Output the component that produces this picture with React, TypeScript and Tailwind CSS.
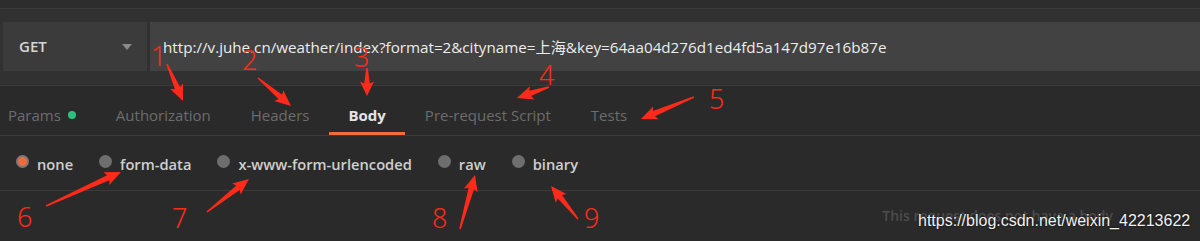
import React from 'react';

const tabs = [
  { label: 'Params', dot: true },
  { label: 'Authorization' },
  { label: 'Headers' },
  { label: 'Body', active: true },
  { label: 'Pre-request Script' },
  { label: 'Tests' },
];

const bodyTypes = [
  { label: 'none', checked: true },
  { label: 'form-data' },
  { label: 'x-www-form-urlencoded' },
  { label: 'raw' },
  { label: 'binary' },
];

// red hand-drawn markers on top of the screenshot
const marks = [
  { n: '1', x: 151, y: 42, from: [167, 64], to: [183, 101] },
  { n: '2', x: 242, y: 46, from: [258, 78], to: [291, 106] },
  { n: '3', x: 354, y: 43, from: [367, 68], to: [367, 96] },
  { n: '4', x: 539, y: 61, from: [549, 87], to: [517, 98] },
  { n: '5', x: 709, y: 85, from: [694, 97], to: [641, 119] },
  { n: '6', x: 17, y: 203, from: [46, 206], to: [121, 172] },
  { n: '7', x: 172, y: 204, from: [207, 212], to: [249, 179] },
  { n: '8', x: 432, y: 204, from: [460, 229], to: [475, 175] },
  { n: '9', x: 584, y: 204, from: [578, 219], to: [551, 186] },
];

function arrowPoints(from: number[], to: number[]) {
  const [x1, y1] = from;
  const [x2, y2] = to;
  const dx = x2 - x1;
  const dy = y2 - y1;
  const len = Math.hypot(dx, dy);
  const ux = dx / len;
  const uy = dy / len;
  const px = -uy;
  const py = ux;
  const head = Math.min(14, len * 0.45);
  const bx = x2 - ux * head;
  const by = y2 - uy * head;
  const tail = 0.8;
  const neck = 2.8;
  const wing = 7;
  const pts = [
    [x1 + px * tail, y1 + py * tail],
    [bx + px * neck, by + py * neck],
    [bx - ux * 2 + px * wing, by - uy * 2 + py * wing],
    [x2, y2],
    [bx - ux * 2 - px * wing, by - uy * 2 - py * wing],
    [bx - px * neck, by - py * neck],
    [x1 - px * tail, y1 - py * tail],
  ];
  return pts.map((p) => p.map((v) => v.toFixed(1)).join(',')).join(' ');
}

export default function App() {
  return (
    <div className="relative w-[1200px] h-[241px] overflow-hidden bg-[#2a2a2a] font-['Open_Sans','Noto_Sans_CJK_SC',sans-serif]">
      {/* top strip */}
      <div className="h-[9px] bg-[#2d2d2d] border-b border-[#3a3a3a]" />

      {/* method + url */}
      <div className="bg-[#313131] pt-[13px] pb-[14px] pl-[3px] flex gap-[3px] border-b border-[#3a3a3a]">
        <div className="w-[144px] h-[49px] bg-[#3b3b3b] flex items-center justify-between pl-[16px] pr-[15px]">
          <span className="text-[15px] font-semibold text-[#d6d6d6]">GET</span>
          <svg width="10" height="6" viewBox="0 0 10 6">
            <path d="M0 0 L10 0 L5 6 Z" fill="#8a8a8a" />
          </svg>
        </div>
        <div className="flex-1 h-[49px] bg-[#424242] flex items-center pl-[13px]">
          <span className="text-[15.2px] text-[#ececec] whitespace-nowrap pt-[1px]">
            http://v.juhe.cn/weather/index?format=2&amp;cityname=上海&amp;key=64aa04d276d1ed4fd5a147d97e16b87e
          </span>
        </div>
      </div>

      {/* tabs */}
      <div className="h-[50px] flex border-b border-[#3a3a3a]">
        {tabs.map((t, i) => (
          <div
            key={t.label}
            className={`flex items-center gap-[7px] h-full pt-[12px] ${i === 0 ? 'pl-[8px] pr-[20px]' : t.active ? 'px-[19px]' : 'px-[20px]'} ${
              t.active ? 'border-b-[3px] border-[#f26b3a]' : 'border-b-[3px] border-transparent'
            }`}
          >
            <span
              className={`text-[15px] ${t.active ? 'font-bold text-[#e4e4e4]' : 'text-[#6c6c6c]'}`}
            >
              {t.label}
            </span>
            {t.dot && <span className="w-[8px] h-[8px] rounded-full bg-[#2bbf7e]" />}
          </div>
        ))}
      </div>

      {/* body types */}
      <div className="h-[55px] flex items-center pl-[16px] gap-[26px] border-b border-[#3a3a3a] pt-[3px]">
        {bodyTypes.map((b) => (
          <div key={b.label} className="flex items-center gap-[8px]">
            {b.checked ? (
              <span className="w-[13px] h-[13px] rounded-full bg-[#f06a3c] border-[2px] border-[#7a7a7a] -mt-[5px]" />
            ) : (
              <span className="w-[13px] h-[13px] rounded-full bg-[#6e6e6e] -mt-[5px]" />
            )}
            <span className="text-[14.7px] font-semibold text-[#cfcfcf]">{b.label}</span>
          </div>
        ))}
      </div>

      {/* empty body hint */}
      <div className="h-[46px] flex items-center justify-end pr-[87px]">
        <span className="text-[14px] font-semibold text-[#4c4c4c] mt-[3px]">This request does not have a body</span>
      </div>

      {/* watermark */}
      <div className="absolute left-[918px] top-[209px] text-[16px] text-[#f2f2f2] font-['Liberation_Sans',sans-serif] [text-shadow:0_0_2px_#000]">
        https://blog.csdn.net/weixin_42213622
      </div>

      {/* annotations */}
      {marks.map((m) => (
        <div
          key={m.n}
          className="absolute text-[27px] leading-none text-[#ff2a1a] font-['Noto_Sans',sans-serif] font-light"
          style={{ left: m.x, top: m.y }}
        >
          {m.n}
        </div>
      ))}
      <svg className="absolute left-0 top-0" width="1200" height="241">
        {marks.map((m) => (
          <polygon key={m.n} points={arrowPoints(m.from, m.to)} fill="#ff2a1a" />
        ))}
      </svg>
    </div>
  );
}
